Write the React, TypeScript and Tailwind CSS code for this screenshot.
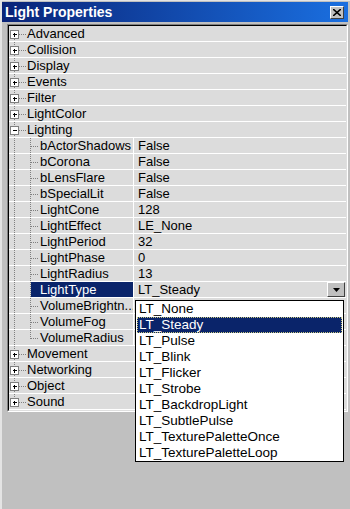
import React from "react";

type Row =
  | { kind: "cat"; name: string; open?: boolean; first?: boolean; last?: boolean }
  | { kind: "prop"; name: string; value: string; last?: boolean; selected?: boolean };

const rows: Row[] = [
  { kind: "cat", name: "Advanced", first: true },
  { kind: "cat", name: "Collision" },
  { kind: "cat", name: "Display" },
  { kind: "cat", name: "Events" },
  { kind: "cat", name: "Filter" },
  { kind: "cat", name: "LightColor" },
  { kind: "cat", name: "Lighting", open: true },
  { kind: "prop", name: "bActorShadows", value: "False" },
  { kind: "prop", name: "bCorona", value: "False" },
  { kind: "prop", name: "bLensFlare", value: "False" },
  { kind: "prop", name: "bSpecialLit", value: "False" },
  { kind: "prop", name: "LightCone", value: "128" },
  { kind: "prop", name: "LightEffect", value: "LE_None" },
  { kind: "prop", name: "LightPeriod", value: "32" },
  { kind: "prop", name: "LightPhase", value: "0" },
  { kind: "prop", name: "LightRadius", value: "13" },
  { kind: "prop", name: "LightType", value: "LT_Steady", selected: true },
  { kind: "prop", name: "VolumeBrightn...", value: "" },
  { kind: "prop", name: "VolumeFog", value: "" },
  { kind: "prop", name: "VolumeRadius", value: "", last: true },
  { kind: "cat", name: "Movement" },
  { kind: "cat", name: "Networking" },
  { kind: "cat", name: "Object" },
  { kind: "cat", name: "Sound", last: true },
];

const options = [
  "LT_None",
  "LT_Steady",
  "LT_Pulse",
  "LT_Blink",
  "LT_Flicker",
  "LT_Strobe",
  "LT_BackdropLight",
  "LT_SubtlePulse",
  "LT_TexturePaletteOnce",
  "LT_TexturePaletteLoop",
];

const dot = { stroke: "#808080", strokeWidth: 1, strokeDasharray: "1 1", shapeRendering: "crispEdges" as const };

function CatLines({ open, first, last }: { open?: boolean; first?: boolean; last?: boolean }) {
  return (
    <svg width="18" height="16" className="shrink-0">
      {!first && <line x1="5.5" y1="0" x2="5.5" y2="4" {...dot} />}
      {!last && <line x1="5.5" y1="13" x2="5.5" y2="16" {...dot} />}
      <line x1="10" y1="8.5" x2="18" y2="8.5" {...dot} />
      <rect x="1.5" y="4.5" width="8" height="8" fill="#fff" stroke="#808080" shapeRendering="crispEdges" />
      <line x1="3.5" y1="8.5" x2="8" y2="8.5" stroke="#000" shapeRendering="crispEdges" />
      {!open && <line x1="5.5" y1="6.5" x2="5.5" y2="11" stroke="#000" shapeRendering="crispEdges" />}
    </svg>
  );
}

function PropLines({ last, selected }: { last?: boolean; selected?: boolean }) {
  const c = selected ? { ...dot, stroke: "#ffffff" } : dot;
  return (
    <svg width="31" height="16" className="shrink-0">
      <line x1="5.5" y1="0" x2="5.5" y2="16" {...dot} />
      <line x1="21.5" y1="0" x2="21.5" y2={last ? 9 : 16} {...dot} />
      <line x1="22" y1="8.5" x2="30" y2="8.5" {...c} />
    </svg>
  );
}

function Caret() {
  return (
    <svg width="7" height="4" viewBox="0 0 7 4">
      <path d="M0 0h7L3.5 4z" fill="#000" />
    </svg>
  );
}

export default function App() {
  return (
    <div
      className="relative w-[350px] h-[509px] bg-[#c0c0c0] border-l-2 border-t border-[#e4e4e4] text-[13px] leading-[16px] text-black overflow-hidden"
      style={{ fontFamily: '"Liberation Sans", Arial, sans-serif' }}
    >
      {/* title bar */}
      <div className="mt-px mr-[2px] h-[20px] flex items-center justify-between pl-[3px] pr-[4px] bg-[linear-gradient(90deg,#0a2478,#1a6fe0)]">
        <span className="text-white font-bold text-[14px] leading-[18px]">Light Properties</span>
        <div className="w-[14px] h-[13px] bg-[#c0c0c0] border border-t-white border-l-white border-r-[#404040] border-b-[#404040] flex items-center justify-center">
          <svg width="8" height="7" viewBox="0 0 8 7">
            <path d="M0 0l8 7M8 0L0 7" stroke="#000" strokeWidth="1.6" />
          </svg>
        </div>
      </div>

      {/* property tree */}
      <div className="ml-[5px] mr-[2px] mt-[2px] border-t border-l border-t-[#808080] border-l-[#808080] border-b border-r border-b-white border-r-white">
        <div className="border-t border-l border-black border-b border-r border-b-[#dfdfdf] border-r-[#dfdfdf] bg-[#dcdcdc]">
          {rows.map((r) =>
            r.kind === "cat" ? (
              <div key={r.name} className="h-[16px] flex border-b border-white overflow-hidden">
                <CatLines open={r.open} first={r.first} last={r.last} />
                <span className="whitespace-nowrap">{r.name}</span>
              </div>
            ) : (
              <div key={r.name} className="h-[16px] flex border-b border-white overflow-hidden">
                <div className="w-[125px] shrink-0 flex border-r border-white overflow-hidden">
                  <PropLines last={r.last} selected={r.selected} />
                  <span
                    className={
                      r.selected
                        ? "flex-1 -ml-[9px] pl-[9px] bg-[#0a246a] text-white whitespace-nowrap"
                        : "whitespace-nowrap"
                    }
                  >
                    {r.name}
                  </span>
                </div>
                <div className="flex-1 flex justify-between pl-[4px] pr-[1px]">
                  <span className="whitespace-nowrap">{r.value}</span>
                  {r.selected && (
                    <div className="w-[18px] h-[15px] bg-[#c0c0c0] border border-t-white border-l-white border-r-[#404040] border-b-[#404040] flex items-center justify-center">
                      <Caret />
                    </div>
                  )}
                </div>
              </div>
            ),
          )}
        </div>
      </div>

      {/* dropdown list */}
      <div className="absolute left-[133px] top-[299px] w-[209px] bg-white border border-black text-[13.5px]">
        {options.map((o) => (
          <div
            key={o}
            className={
              o === "LT_Steady"
                ? "h-[16px] mx-px bg-[#0a246a] text-white pl-[2px] outline-1 outline-dotted outline-[#c8c880] -outline-offset-1 whitespace-nowrap"
                : "h-[16px] mx-px pl-[2px] whitespace-nowrap"
            }
          >
            {o}
          </div>
        ))}
      </div>
    </div>
  );
}
